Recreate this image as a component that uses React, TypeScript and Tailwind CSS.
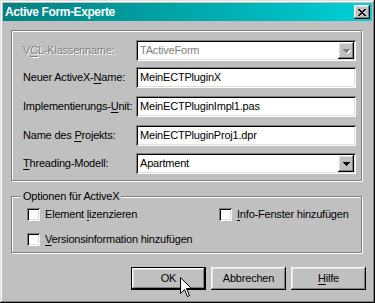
import React from "react";

const sunken =
  "shadow-[inset_1px_1px_0_#808080,inset_-1px_-1px_0_#ffffff,inset_2px_2px_0_#000000,inset_-2px_-2px_0_#dfdfdf]";
const raised =
  "shadow-[inset_-1px_-1px_0_#000000,inset_1px_1px_0_#ffffff,inset_-2px_-2px_0_#808080,inset_2px_2px_0_#dfdfdf]";

function Arrow({ disabled }: { disabled?: boolean }) {
  return (
    <svg width="7" height="4" viewBox="0 0 7 4" className="block" style={{ overflow: "visible" }}>
      {disabled && <path d="M1 1h7M2 2h5M3 3h3M4 4h1" stroke="#ffffff" strokeWidth="1" transform="translate(0,0.5)" />}
      <path d="M0 0.5h7M1 1.5h5M2 2.5h3M3 3.5h1" stroke={disabled ? "#808080" : "#000000"} strokeWidth="1" />
    </svg>
  );
}

function Field({ value, combo, disabled }: { value: string; combo?: boolean; disabled?: boolean }) {
  return (
    <div className={`w-[220px] h-[21px] bg-white flex items-center pl-[4px] pr-[2px] ${sunken}`}>
      <span className={`flex-1 leading-none whitespace-nowrap ${disabled ? "text-[#808080]" : "text-black"}`}>{value}</span>
      {combo && (
        <div className={`w-[16px] h-[17px] bg-[#c0c0c0] flex items-center justify-center ${raised}`}>
          <Arrow disabled={disabled} />
        </div>
      )}
    </div>
  );
}

function U({ children }: { children: React.ReactNode }) {
  return <span className="underline underline-offset-[2px]">{children}</span>;
}

function Row({ label, children, className = "" }: { label: React.ReactNode; children: React.ReactNode; className?: string }) {
  return (
    <div className={`flex items-center h-[21px] ${className}`}>
      <div className="w-[113px] leading-none whitespace-nowrap">{label}</div>
      {children}
    </div>
  );
}

function Check({ label }: { label: React.ReactNode }) {
  return (
    <div className="flex items-center h-[13px]">
      <div className={`w-[13px] h-[13px] bg-white ${sunken}`} />
      <span className="ml-[5px] leading-none whitespace-nowrap">{label}</span>
    </div>
  );
}

function Cursor() {
  return (
    <svg width="13" height="21" viewBox="0 0 13 21" className="absolute left-[180px] top-[277px]">
      <path
        d="M0.5 0.5 L0.5 16.5 L4.5 12.5 L7.5 19.5 L9.5 18.5 L6.5 11.5 L11.5 11.5 Z"
        fill="#ffffff"
        stroke="#000000"
        strokeWidth="1"
        strokeLinejoin="miter"
      />
    </svg>
  );
}

export default function App() {
  return (
    <div
      className={`relative w-[375px] h-[303px] bg-[#c0c0c0] p-[3px] flex flex-col text-[11px] tracking-[-0.2px] text-black shadow-[inset_-1px_-1px_0_#000000,inset_1px_1px_0_#dfdfdf,inset_-2px_-2px_0_#808080,inset_2px_2px_0_#ffffff]`}
      style={{ fontFamily: '"Liberation Sans", Arial, sans-serif' }}
    >
      {/* Title bar */}
      <div className="h-[18px] flex items-center bg-gradient-to-r from-[#008080] to-[#00d0d8] pl-[2px] pr-[2px]">
        <span className="flex-1 text-white font-bold text-[12px] tracking-[-0.4px] leading-none">Active Form-Experte</span>
        <div className={`w-[16px] h-[14px] bg-[#c0c0c0] flex items-center justify-center ${raised}`}>
          <svg width="8" height="7" viewBox="0 0 8 7" className="block">
            <path
              d="M0 0h2v1h-2zM6 0h2v1h-2zM1 1h2v1h-2zM5 1h2v1h-2zM2 2h4v1h-4zM3 3h2v1h-2zM2 4h4v1h-4zM1 5h2v1h-2zM5 5h2v1h-2zM0 6h2v1h-2zM6 6h2v1h-2z"
              fill="#000000"
            />
          </svg>
        </div>
      </div>

      {/* Body */}
      <div className="flex flex-col pl-[8px]">
        {/* Upper frame */}
        <div className="mt-[9px] w-[351px] h-[151px] border border-[#808080] shadow-[1px_1px_0_#ffffff,inset_1px_1px_0_#ffffff] pl-[11px] pt-[9px] flex flex-col">
          <Row label={<span className="text-[#808080] [text-shadow:1px_1px_0_#ffffff]">V<U>C</U>L-Klassenname:</span>}>
            <Field value="TActiveForm" combo disabled />
          </Row>
          <Row className="mt-[6px]" label={<>Neuer ActiveX-<U>N</U>ame:</>}>
            <Field value="MeinECTPluginX" />
          </Row>
          <Row className="mt-[8px]" label={<>Implementierungs-<U>U</U>nit:</>}>
            <Field value="MeinECTPluginImpl1.pas" />
          </Row>
          <Row className="mt-[8px]" label={<>Name des <U>P</U>rojekts:</>}>
            <Field value="MeinECTPluginProj1.dpr" />
          </Row>
          <Row className="mt-[7px]" label={<><U>T</U>hreading-Modell:</>}>
            <Field value="Apartment" combo />
          </Row>
        </div>

        {/* Group box */}
        <div className="relative mt-[15px] w-[351px] h-[57px] border border-[#808080] shadow-[1px_1px_0_#ffffff,inset_1px_1px_0_#ffffff] pl-[15px] pt-[11px] flex flex-col">
          <span className="absolute left-[9px] top-[-7px] px-[2px] bg-[#c0c0c0] leading-[13px]">Optionen für ActiveX</span>
          <div className="flex items-center">
            <div className="w-[192px]">
              <Check label={<>Element <U>l</U>izenzieren</>} />
            </div>
            <Check label={<><U>I</U>nfo-Fenster hinzufügen</>} />
          </div>
          <div className="mt-[12px]">
            <Check label={<><U>V</U>ersionsinformation hinzufügen</>} />
          </div>
        </div>

        {/* Buttons */}
        <div className="mt-[14px] ml-[120px] flex gap-[5px]">
          <div className="w-[75px] h-[23px] border border-black">
            <div className={`w-full h-full bg-[#c0c0c0] flex items-center justify-center ${raised}`}>OK</div>
          </div>
          <div className={`w-[75px] h-[23px] bg-[#c0c0c0] flex items-center justify-center ${raised}`}>Abbrechen</div>
          <div className={`w-[75px] h-[23px] bg-[#c0c0c0] flex items-center justify-center ${raised}`}>
            <span><U>H</U>ilfe</span>
          </div>
        </div>
      </div>

      <Cursor />
    </div>
  );
}
